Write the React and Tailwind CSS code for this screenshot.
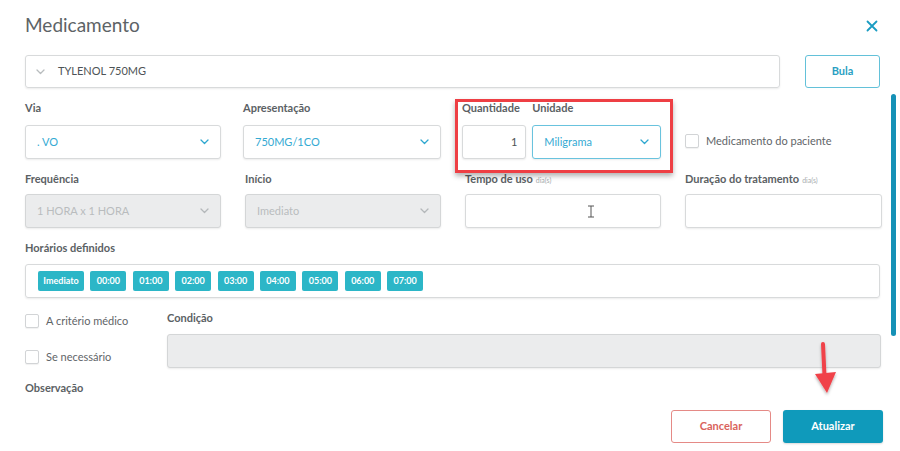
import React from 'react';

const font = { fontFamily: 'Lato, "Open Sans", sans-serif' };

const Chevron = ({ color = '#2ea7cf' }) => (
    <svg width="9" height="6" viewBox="0 0 9 6" fill="none">
        <path d="M1 1l3.5 3.5L8 1" stroke={color} strokeWidth="1.3" strokeLinecap="round" strokeLinejoin="round" />
    </svg>
);

const Label = ({ children, small }) => (
    <div className="h-[14px] text-[11px] leading-[14px] font-bold text-[#5b6164] whitespace-nowrap">
        {children}
        {small && <span className="ml-[3px] text-[7px] font-normal text-[#a8adb0]">{small}</span>}
    </div>
);

const Select = ({ value, disabled, active }) => (
    <div
        className={`flex items-center justify-between h-[34px] px-[11px] rounded-[3px] border text-[11px] shadow-[0_1px_2px_rgba(0,0,0,0.08)] ${
            disabled
                ? 'bg-[#ebeced] border-[#d4d6d7] text-[#b9bcbe]'
                : active
                ? 'bg-white border-[#69c3de] text-[#35aad3]'
                : 'bg-white border-[#d8dadb] text-[#35aad3]'
        }`}
    >
        <span>{value}</span>
        <Chevron color={disabled ? '#b4b8ba' : '#2ea7cf'} />
    </div>
);

const Box = ({ children, className = '' }) => (
    <div className={`h-[34px] rounded-[3px] border border-[#d8dadb] bg-white shadow-[0_1px_2px_rgba(0,0,0,0.08)] ${className}`}>
        {children}
    </div>
);

const Check = ({ label }) => (
    <div className="flex items-center gap-[7px]">
        <div className="w-[14px] h-[14px] rounded-[2px] border border-[#d2d4d6] bg-white shadow-[0_1px_1px_rgba(0,0,0,0.06)]" />
        <span className="text-[11px] text-[#5f6568]">{label}</span>
    </div>
);

const horarios = ['Imediato', '00:00', '01:00', '02:00', '03:00', '04:00', '05:00', '06:00', '07:00'];

export default function App() {
    return (
        <div style={font} className="relative w-[900px] h-[451px] overflow-hidden bg-white">
            {/* header */}
            <div className="flex items-center justify-between pl-[25px] pr-[22px] pt-[12px] h-[38px]">
                <h1 className="text-[19px] leading-[24px] text-[#5d6366]">Medicamento</h1>
                <svg width="12" height="12" viewBox="0 0 12 12" className="mt-[2px]">
                    <path d="M1.5 1.5l9 9M10.5 1.5l-9 9" stroke="#1a9cc2" strokeWidth="1.8" strokeLinecap="round" />
                </svg>
            </div>

            {/* medicamento busca */}
            <div className="flex gap-[25px] pl-[25px] pr-[20px] mt-[17px]">
                <div className="flex-1 flex items-center h-[33px] rounded-[3px] border border-[#d8dadb] shadow-[0_1px_2px_rgba(0,0,0,0.08)] pl-[10px]">
                    <Chevron color="#b8bcbe" />
                    <span className="ml-[13px] text-[11px] text-[#4d5356]">TYLENOL 750MG</span>
                </div>
                <button className="w-[75px] h-[33px] rounded-[3px] border border-[#63c1d9] text-[11px] font-bold text-[#2a9fc2]">
                    Bula
                </button>
            </div>

            {/* form */}
            <div className="pl-[25px] pr-[19px]">
                <div className="grid grid-cols-[196px_196px_196px_197px] gap-x-6 mt-[13px]">
                    <div>
                        <Label>Via</Label>
                        <div className="mt-[10px]"><Select value=". VO" /></div>
                    </div>
                    <div className="-ml-[2px]">
                        <Label>Apresentação</Label>
                        <div className="mt-[10px]"><Select value="750MG/1CO" /></div>
                    </div>
                    <div className="flex gap-[6px] -ml-[3px]">
                        <div className="w-[65px]">
                            <Label>Quantidade</Label>
                            <Box className="mt-[10px] flex items-center justify-end pr-[8px] text-[11px] text-[#4d5356]">1</Box>
                        </div>
                        <div className="w-[130px]">
                            <Label>Unidade</Label>
                            <div className="mt-[10px]"><Select value="Miligrama" active /></div>
                        </div>
                    </div>
                    <div className="pt-[32px]">
                        <Check label="Medicamento do paciente" />
                    </div>

                    <div className="mt-[13px]">
                        <Label>Frequência</Label>
                        <div className="mt-[8px]"><Select value="1 HORA x 1 HORA" disabled /></div>
                    </div>
                    <div className="mt-[13px]">
                        <Label>Início</Label>
                        <div className="mt-[8px]"><Select value="Imediato" disabled /></div>
                    </div>
                    <div className="mt-[13px]">
                        <Label small="dia(s)">Tempo de uso</Label>
                        <Box className="mt-[8px] flex items-center justify-center">
                            <svg width="8" height="13" viewBox="0 0 8 13" className="ml-[56px]">
                                <path d="M1 1h6M1 12h6M4 1v11" stroke="#555" strokeWidth="1" />
                            </svg>
                        </Box>
                    </div>
                    <div className="mt-[13px]">
                        <Label small="dia(s)">Duração do tratamento</Label>
                        <Box className="mt-[8px]" />
                    </div>
                </div>

                {/* horarios */}
                <div className="mt-[13px] mr-[1px]">
                    <Label>Horários definidos</Label>
                    <div className="mt-[9px] h-[34px] flex items-center gap-[6.4px] px-[12px] rounded-[3px] border border-[#d8dadb] shadow-[0_1px_2px_rgba(0,0,0,0.08)]">
                        {horarios.map((h) => (
                            <span
                                key={h}
                                className={`h-[20px] flex items-center justify-center rounded-[2px] bg-[#2cb6c7] text-white text-[9px] font-bold ${
                                    h === 'Imediato' ? 'w-[46px]' : 'w-[36px]'
                                }`}
                            >
                                {h}
                            </span>
                        ))}
                    </div>
                </div>

                {/* condicao */}
                <div className="flex mt-[13px]">
                    <div className="w-[142px] flex flex-col gap-[19px] pt-[2px]">
                        <Check label="A critério médico" />
                        <Check label="Se necessário" />
                    </div>
                    <div className="flex-1">
                        <Label>Condição</Label>
                        <div className="mt-[9px] h-[34px] rounded-[3px] border border-[#d4d6d7] bg-[#ebeced] shadow-[0_1px_2px_rgba(0,0,0,0.08)]" />
                    </div>
                </div>

                <div className="mt-[13px]">
                    <Label>Observação</Label>
                </div>

                {/* footer */}
                <div className="flex justify-end gap-[12px] mt-[15px] -mr-[2px]">
                    <button className="w-[100px] h-[33px] rounded-[3px] border border-[#e58a86] bg-white text-[11px] font-bold text-[#d9635c]">
                        Cancelar
                    </button>
                    <button className="w-[100px] h-[33px] rounded-[3px] bg-[#0f9abb] text-[11px] font-bold text-white shadow-[0_1px_2px_rgba(0,0,0,0.15)]">
                        Atualizar
                    </button>
                </div>
            </div>

            {/* scrollbar */}
            <div className="absolute left-[891px] top-[94px] w-[5px] h-[242px] rounded-full bg-[#1591b6]" />

            {/* annotation: red highlight */}
            <div className="absolute left-[455px] top-[99px] w-[218px] h-[74px] border-[3px] border-[#ee3f44] shadow-[0_3px_5px_rgba(0,0,0,0.3)]" />

            {/* annotation: arrow */}
            <svg className="absolute left-[810px] top-[338px]" width="32" height="62" viewBox="0 0 32 62">
                <defs>
                    <filter id="sh" x="-50%" y="-50%" width="200%" height="200%">
                        <feDropShadow dx="0" dy="2" stdDeviation="1.5" floodOpacity="0.3" />
                    </filter>
                </defs>
                <g filter="url(#sh)">
                    <path d="M13 6l1.5 32" stroke="#f0434a" strokeWidth="4" strokeLinecap="round" />
                    <path d="M5 36l21-2-9 21z" fill="#f0434a" />
                </g>
            </svg>
        </div>
    );
}
